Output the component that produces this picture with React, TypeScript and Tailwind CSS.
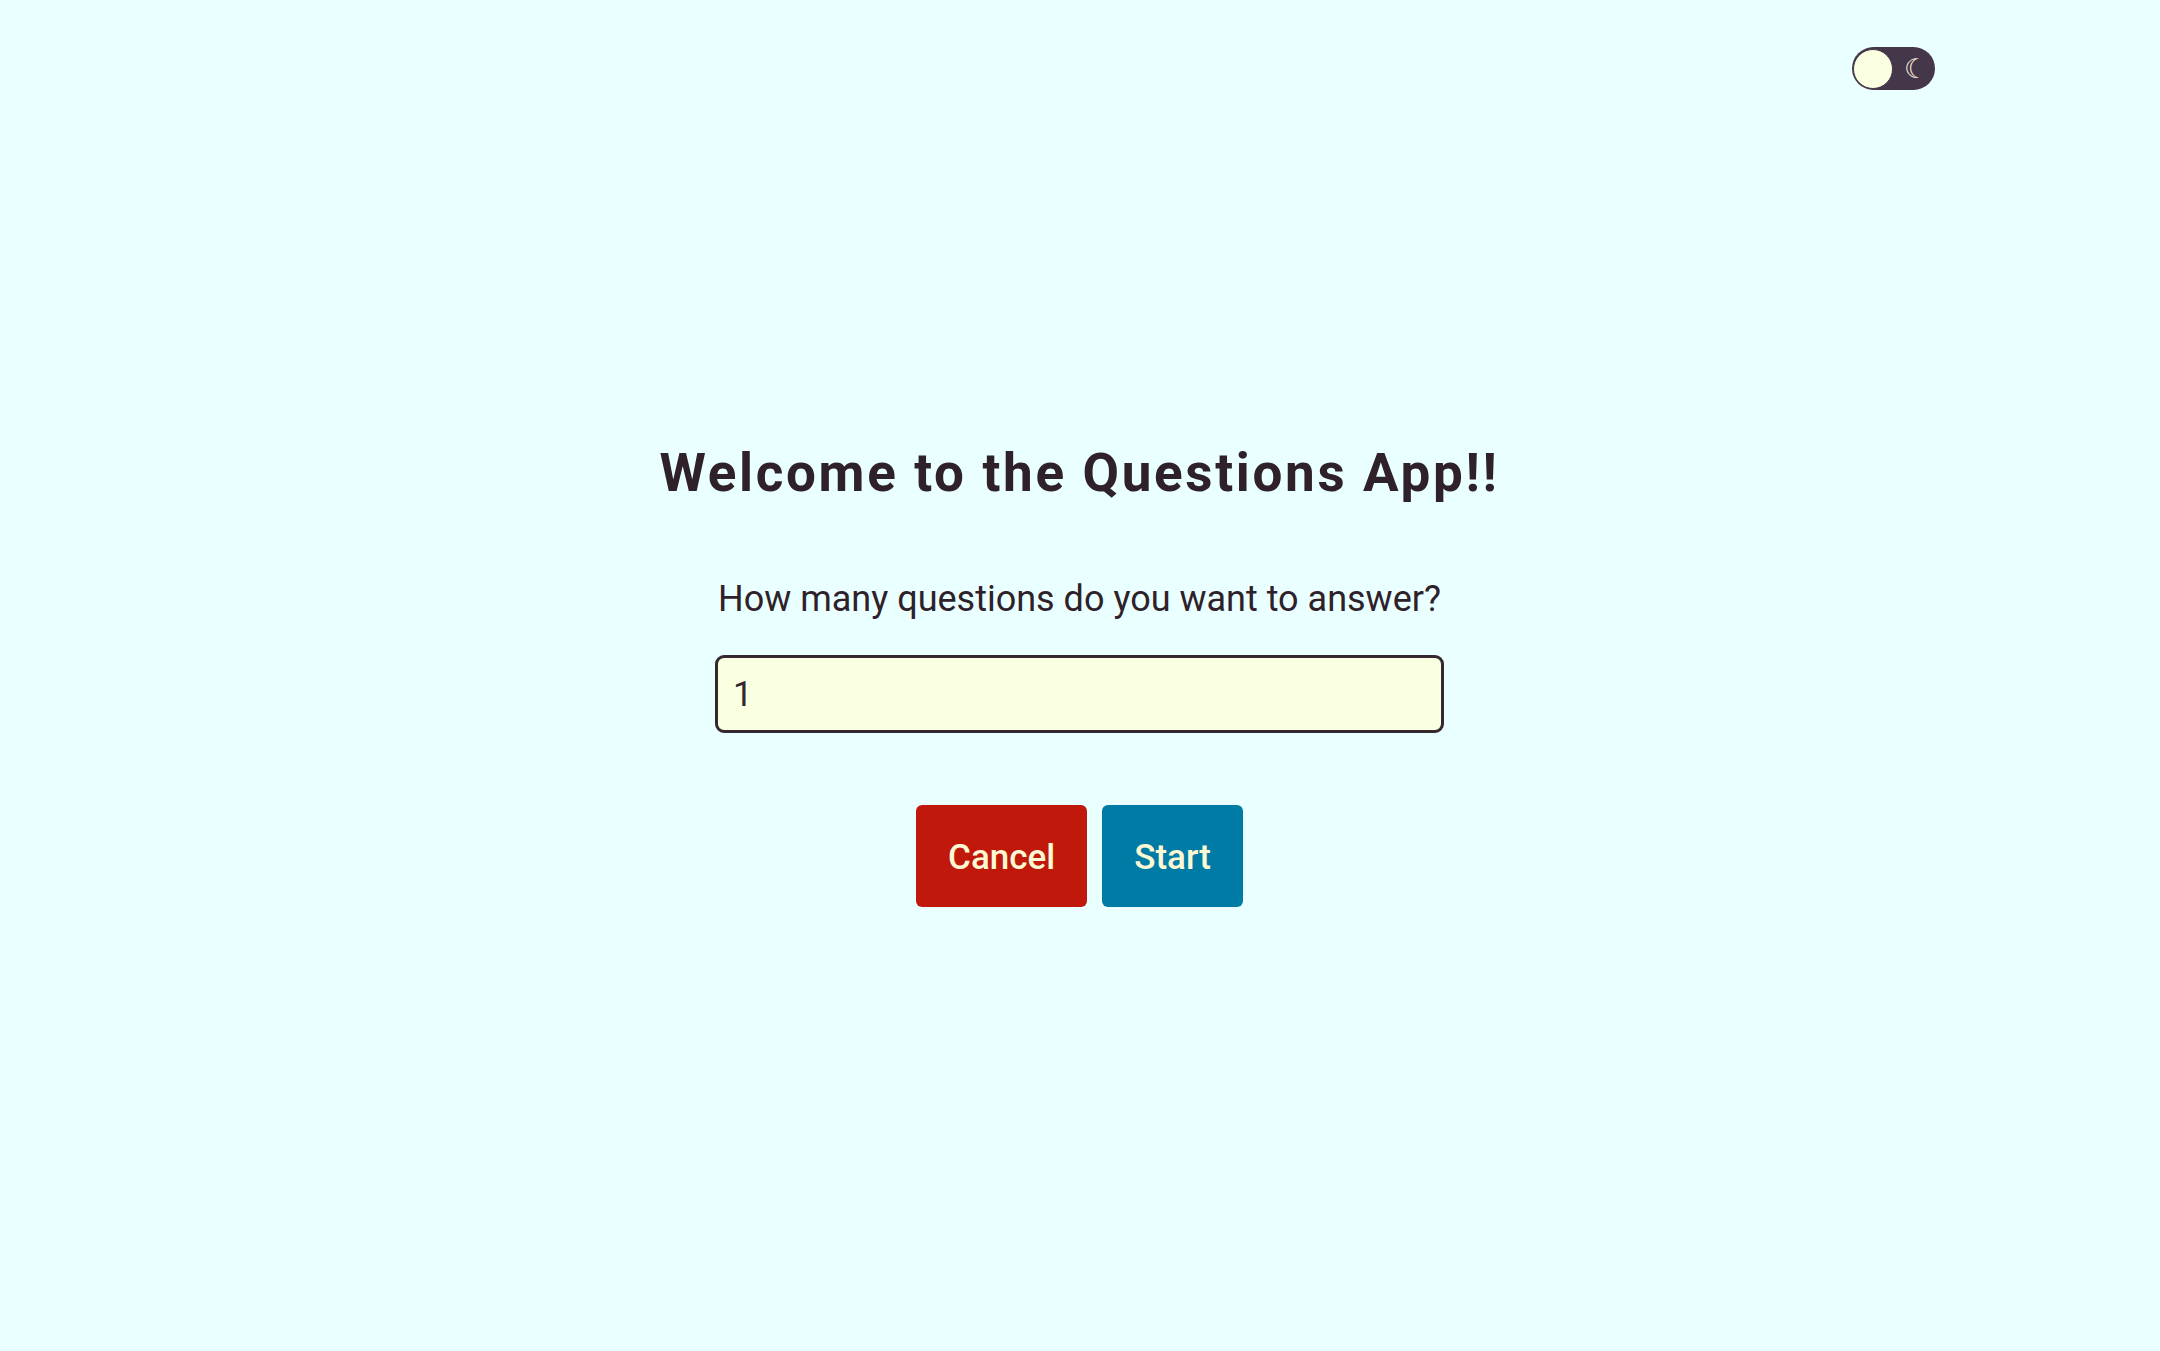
import React, { useState } from "react";

export default function App() {
  const [count, setCount] = useState("1");
  return (
    <div
      className="relative min-h-screen w-full bg-[#eaffff] flex items-center justify-center"
      style={{ fontFamily: "Roboto, 'Noto Sans', sans-serif" }}
    >
      <button className="absolute top-[47px] right-[225px] w-[83px] h-[43px] rounded-full bg-[#45374a] flex items-center pl-[1px]">
        <span className="w-[40px] h-[40px] rounded-full bg-[#fbffe2] border-[1.5px] border-[#45374a]" />
        <span
          className="ml-[11px] text-[27px] leading-none text-[#f3ecd6]"
          style={{ fontFamily: "'DejaVu Sans', sans-serif" }}
        >
          ☾
        </span>
      </button>

      <div className="flex flex-col items-center mr-[1px] pt-[3px]">
        <h1 className="text-[53px] leading-none font-bold tracking-[0.05em] text-[#2e2129]">
          Welcome to the Questions App!!
        </h1>
        <p className="mt-[81px] text-[36px] leading-none text-[#2e2129]">
          How many questions do you want to answer?
        </p>
        <input
          type="number"
          value={count}
          onChange={(e) => setCount(e.target.value)}
          className="mt-[38px] w-[729px] h-[78px] rounded-[9px] border-[3px] border-[#35282f] bg-[#f9ffe1] pl-[15px] text-[35px] text-[#35282f] outline-none [appearance:textfield]"
          style={{ fontFamily: "Roboto, sans-serif" }}
        />
        <div className="mt-[72px] flex gap-[15px]">
          <button className="h-[102px] px-[32px] pt-[4px] rounded-[6px] bg-[#c0180b] text-[35px] font-medium text-[#fdf8d4]">
            Cancel
          </button>
          <button className="h-[102px] px-[32px] pt-[4px] rounded-[6px] bg-[#007ba5] text-[35px] font-medium text-[#fdf8d4]">
            Start
          </button>
        </div>
      </div>
    </div>
  );
}
